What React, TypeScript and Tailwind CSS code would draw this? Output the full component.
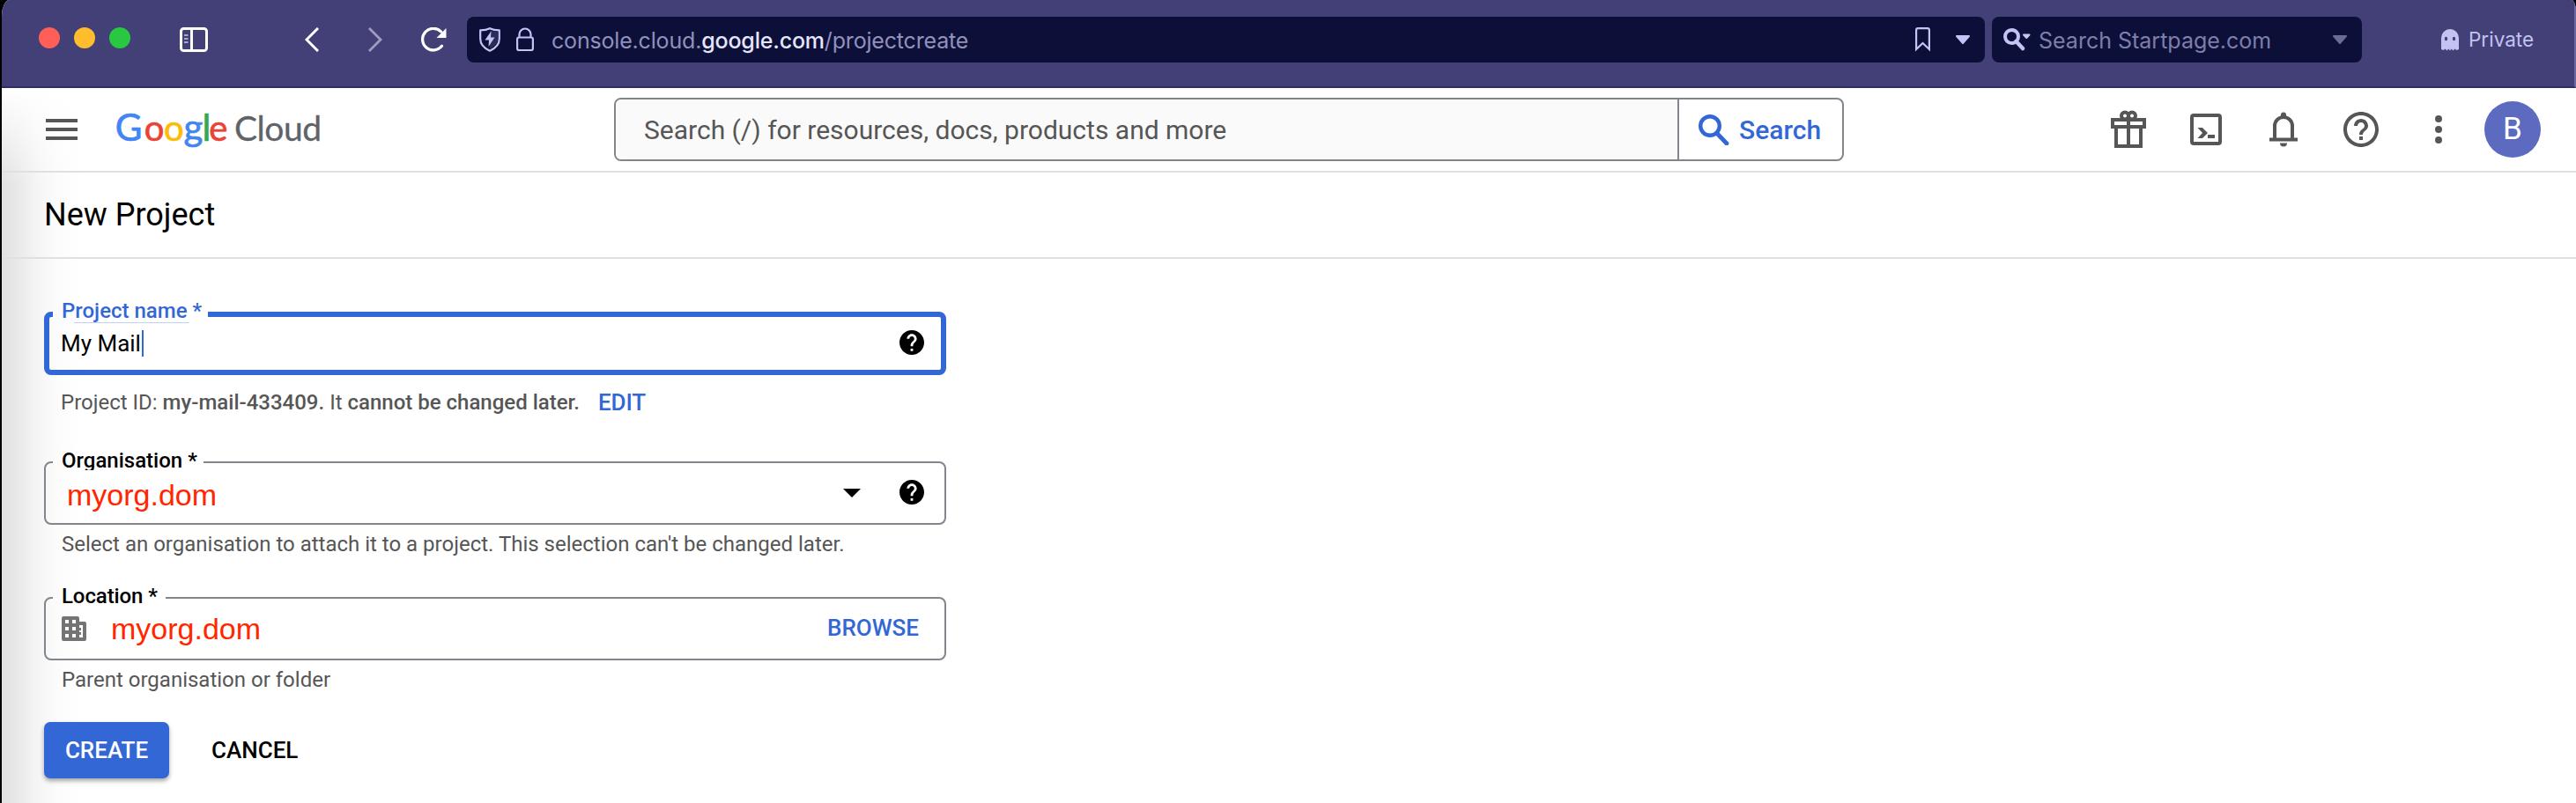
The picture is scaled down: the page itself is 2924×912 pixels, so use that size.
import type { ReactNode } from 'react';

function HelpFilled() {
  return (
    <svg width="28" height="28" viewBox="2 2 20 20" fill="#000">
      <path d="M12 2C6.48 2 2 6.48 2 12s4.48 10 10 10 10-4.48 10-10S17.52 2 12 2zm1 17h-2v-2h2v2zm2.07-7.75l-.9.92C13.45 12.9 13 13.5 13 15h-2v-.5c0-1.1.45-2.1 1.17-2.83l1.24-1.26c.37-.36.59-.86.59-1.41 0-1.1-.9-2-2-2s-2 .9-2 2H8c0-2.21 1.79-4 4-4s4 1.79 4 4c0 .88-.36 1.68-.93 2.25z" />
    </svg>
  );
}

function RoundCaret({ color }: { color: string }) {
  return (
    <svg width="16" height="10" viewBox="0 0 16 10" fill={color} stroke={color} strokeWidth="2" strokeLinejoin="round">
      <path d="M1 1h14L8 9z" />
    </svg>
  );
}

function BrowserBar() {
  return (
    <div className="flex h-[100px] items-start border-b-2 border-[#312d63] border-r-2 border-r-[#6b69a0] bg-[#424076] pl-[42px] pt-[19px] font-['Inter',sans-serif]">
      <div className="mt-3 flex gap-4">
        <span className="size-6 rounded-full bg-[#ff5f57]" />
        <span className="size-6 rounded-full bg-[#febc2e]" />
        <span className="size-6 rounded-full bg-[#28c840]" />
      </div>
      <svg className="ml-[56px] mt-3" width="32" height="28" viewBox="0 0 32 28" fill="none" stroke="#fff" strokeWidth="3">
        <rect x="1.5" y="1.5" width="29" height="25" rx="3" />
        <path d="M13.5 1.5v25" />
        <path d="M5 9h4.500M5 13h4.500M5 17h4.500" stroke="#a9a8c8" strokeWidth="1.800" />
      </svg>
      <svg className="ml-[110px] mt-3" width="16" height="28" viewBox="0 0 16 28" fill="none" stroke="#fff" strokeWidth="3">
        <path d="M15 1L2 14l13 13" />
      </svg>
      <svg className="ml-[56px] mt-3" width="16" height="28" viewBox="0 0 16 28" fill="none" stroke="#9f9dbf" strokeWidth="2.800">
        <path d="M1 1l13 13L1 27" />
      </svg>
      <svg className="ml-[43px] mt-3" width="30" height="28" viewBox="0 0 30 28" fill="none">
        <path d="M23.500 4.800A12.300 12.300 0 1 0 24.500 21.300" stroke="#fff" strokeWidth="3.200" strokeLinecap="round" />
        <path d="M29.500 1v11h-11z" fill="#fff" />
      </svg>

      <div className="ml-[23px] flex h-[52px] w-[1723px] items-center rounded-lg bg-[#0c1038] pl-[14px] pr-[17px]">
        <svg width="24" height="28" viewBox="0 0 24 28">
          <path d="M12 1.200C15 2.700 19 3.300 22.800 3.300V13C22.800 19.500 18 24 12 26.700 6 24 1.200 19.500 1.200 13V3.300C5 3.300 9 2.700 12 1.200z" fill="none" stroke="#c3c4f5" strokeWidth="2.200" strokeLinejoin="round" />
          <path d="M12 3.500C15 4.500 18 5 21 5.200V13C21 18 17 22 12 24.500z" fill="#2b2c58" />
          <path d="M13.500 4.500L6.500 14.500h4.500l-.5 7.500 7-10.500h-4.500z" fill="#c3c4f5" />
        </svg>
        <svg className="ml-[18px]" width="20" height="28" viewBox="0 0 20 28" fill="none" stroke="#c3c4f5" strokeWidth="2.200">
          <rect x="1.100" y="11.500" width="17.800" height="14.500" rx="2" />
          <path d="M3.500 11.500V8a6.500 6.500 0 0 1 13 0v3.500" />
        </svg>
        <span className="ml-[20px] mt-[2px] flex-1 whitespace-nowrap text-[25px] leading-8 tracking-[-0.180px] text-[#9290bd]">
          console.cloud.<span className="font-medium text-[#e6e5fb]">google.com</span>/projectcreate
        </span>
        <svg className="mr-[29px]" width="17" height="28" viewBox="0 0 17 28" fill="none" stroke="#c3c4f5" strokeWidth="2.200">
          <path d="M1.100 25V3a2 2 0 0 1 2-1.900h10.800a2 2 0 0 1 2 1.900V25l-7.400-7z" />
        </svg>
        <RoundCaret color="#c3c4f5" />
      </div>

      <div className="ml-2 flex h-[52px] w-[420px] items-center rounded-lg bg-[#0c1038] pl-[13px] pr-[17px]">
        <svg width="31" height="26" viewBox="0 0 31 26" fill="none">
          <circle cx="9.500" cy="9.500" r="7.500" stroke="#c3c4f5" strokeWidth="4" />
          <path d="M14.500 15l7.500 8" stroke="#c3c4f5" strokeWidth="4.500" strokeLinecap="round" />
          <path d="M23 7.500h6.500L26.300 11z" fill="#c3c4f5" stroke="#c3c4f5" strokeWidth="2" strokeLinejoin="round" />
        </svg>
        <span className="ml-[9px] mt-[2px] flex-1 whitespace-nowrap text-[25px] leading-8 text-[#7f7dab]">Search Startpage.com</span>
        <RoundCaret color="#6b6a99" />
      </div>

      <svg className="ml-[90px] mt-[14px]" width="20" height="25" viewBox="0 0 20 25">
        <path d="M0 10a10 10 0 0 1 20 0v13l-2.500 1-2-1.500-2 2-1.800-2L10 24.500l-1.700-2-1.800 2-2-2-2 1.500L0 23z" fill="#c3c2f3" />
        <ellipse cx="5.500" cy="11" rx="1.700" ry="2.200" fill="#424076" />
        <ellipse cx="14.500" cy="11" rx="1.700" ry="2.200" fill="#424076" />
      </svg>
      <span className="ml-[11px] mt-[14px] text-[22.500px] leading-[24px] text-[#c3c2f3]">Private</span>
    </div>
  );
}

function Logo() {
  return (
    <svg className="ml-9" width="248" height="72" viewBox="124 111 248 72" fontFamily="Lato, sans-serif">
      <g fontSize="42" strokeWidth="0.700">
        <text x="130.800" y="160" fill="#4285f4" stroke="#4285f4">G</text>
        <text x="163.800" y="160" fontSize="40" fill="#ea4335" stroke="#ea4335">o</text>
        <text x="186" y="160" fontSize="40" fill="#fbbc05" stroke="#fbbc05">o</text>
        <text x="208.500" y="160" fill="#4285f4" stroke="#4285f4">g</text>
        <text x="229.500" y="160" fill="#34a853" stroke="#34a853">l</text>
        <text x="237.300" y="160" fontSize="40" fill="#ea4335" stroke="#ea4335">e</text>
      </g>
      <text x="266" y="160" fontSize="39" letterSpacing="-0.450" fill="#5f6368" stroke="#5f6368" strokeWidth="0.300">Cloud</text>
    </svg>
  );
}

function ConsoleHeader() {
  return (
    <header className="flex h-24 items-center border-b-2 border-[#e0e0e0] pl-[50px]">
      <svg width="36" height="24" viewBox="0 0 36 24" fill="#565656">
        <path d="M0 0h36v4H0zM0 10h36v4H0zM0 20h36v4H0z" />
      </svg>
      <Logo />
      <div className="ml-[325px] flex h-[72px] w-[1396px] overflow-hidden rounded-lg border-2 border-[#80868b]">
        <div className="flex w-[1205px] items-center bg-[#fafafa] pl-8 text-[30px] text-[#565656]">
          Search (/) for resources, docs, products and more
        </div>
        <button className="flex flex-1 items-center border-l-2 border-[#80868b] pl-[22px] text-[30px] font-medium text-[#3367d6]">
          <svg width="35" height="35" viewBox="0 0 35 35" fill="none" stroke="#3367d6">
            <circle cx="13" cy="13" r="10.800" strokeWidth="4.400" />
            <path d="M21 21.500L32 33" strokeWidth="4.800" strokeLinecap="round" />
          </svg>
          <span className="ml-[11px]">Search</span>
        </button>
      </div>

      <svg className="ml-[303px]" width="40" height="44" viewBox="0 0 40 44" fill="none" stroke="#565656" strokeWidth="4">
        <path d="M2 11h36v8H2zM6 19v22h28V19M20 11v30" />
        <circle cx="16" cy="6.500" r="4" />
        <circle cx="24" cy="6.500" r="4" />
      </svg>
      <svg className="ml-[50px]" width="36" height="36" viewBox="0 0 36 36">
        <rect x="2" y="2" width="32" height="32" rx="2" fill="none" stroke="#565656" strokeWidth="4" />
        <path d="M8.500 16h5.500l6 6-6 6H8.500l5.500-6zM20 24h8v4h-8z" fill="#565656" />
      </svg>
      <svg className="ml-[54px]" width="32" height="40" viewBox="0 0 32 40">
        <path d="M6 31V16a10 10 0 0 1 20 0v15M0 31.500h32" fill="none" stroke="#565656" strokeWidth="4" />
        <path d="M13 7V3.500a3 3 0 0 1 6 0V7zM12 35.500h8a4 4 0 0 1-8 0z" fill="#565656" />
      </svg>
      <svg className="ml-[52px]" width="40" height="40" viewBox="2 2 20 20" fill="#565656">
        <path d="M11 18h2v-2h-2v2zm1-16C6.480 2 2 6.480 2 12s4.480 10 10 10 10-4.480 10-10S17.520 2 12 2zm0 18c-4.410 0-8-3.590-8-8s3.590-8 8-8 8 3.590 8 8-3.590 8-8 8zm0-14c-2.210 0-4 1.790-4 4h2c0-1.100.9-2 2-2s2 .9 2 2c0 2-3 1.750-3 5h2c0-2.250 3-2.500 3-5 0-2.210-1.790-4-4-4z" />
      </svg>
      <svg className="ml-16" width="8" height="32" viewBox="0 0 8 32" fill="#565656">
        <circle cx="4" cy="4" r="4" />
        <circle cx="4" cy="16" r="4" />
        <circle cx="4" cy="28" r="4" />
      </svg>
      <div className="ml-12 flex size-16 items-center justify-center rounded-full bg-[#5c6bc0] text-[35px] leading-10 text-white">B</div>
    </header>
  );
}

function Field({ label, focused, children }: { label: ReactNode; focused?: boolean; children: ReactNode }) {
  return (
    <fieldset
      className={
        focused
          ? 'h-[72px] w-[1024px] rounded-lg border-[6px] border-[#3367d6] pl-1'
          : 'h-[72px] w-[1024px] rounded-lg border-2 border-[#80868b] pl-2'
      }
    >
      {label}
      {children}
    </fieldset>
  );
}

export default function App() {
  return (
    <div className="h-[912px] w-[2924px] overflow-hidden bg-black pl-[2px] font-['Roboto',sans-serif]">
      <div className="h-full overflow-hidden rounded-tl-[9px_18px] rounded-tr-[5px_14px] bg-white">
        <BrowserBar />
        <div className="h-[812px] bg-[linear-gradient(to_bottom,#ffffff_0px,#ffffff00_110px),linear-gradient(to_right,#e1e1e1_0px,#e9e9e9_18px,#f4f4f4_38px,#fbfbfb_60px,#ffffff_90px)]">
          <ConsoleHeader />
          <div className="flex h-[98px] items-center border-b-2 border-[#e0e0e0] pl-12 text-[36px] text-black">New Project</div>

          <main className="flex flex-col pl-12 pt-[60px]">
            <Field
              focused
              label={
                <legend className="flex h-[6px] w-[176px] items-center pl-[10px]">
                  <span className="relative -top-1 whitespace-nowrap text-[24px] font-medium leading-6 text-[#3367d6]">
                    Project name *
                    <span className="absolute left-[14px] top-[25px] h-px w-[131px] bg-[#c2d1f3]" />
                  </span>
                </legend>
              }
            >
              <div className="flex h-[60px] items-center justify-between pl-[9px] pr-[19px]">
                <span className="flex items-center text-[26px] leading-8 text-black">
                  My Mail
                  <span className="ml-px h-[30px] w-[2px] bg-[#3367d6]" />
                </span>
                <span className="-mt-[2px]">
                  <HelpFilled />
                </span>
              </div>
            </Field>
            <div className="mt-[19px] flex h-6 items-center pl-[19px] text-[24px] leading-6 text-[#565656]">
              <span className="whitespace-pre">
                Project ID: <b className="font-medium">my-mail-433409.</b> It <b className="font-medium">cannot be changed later.</b>
              </span>
              <button className="ml-[21px] text-[26px] font-medium leading-6 tracking-[-0.150px] text-[#3367d6]">EDIT</button>
            </div>

            <div className="h-[55px]" />
            <Field
              label={
                <legend className="flex h-[2px] w-[171px] items-center pl-[10px]">
                  <span className="relative top-[-2px] h-6 whitespace-nowrap text-[24px] font-medium leading-6 text-black [clip-path:inset(-4px_-4px_1px_-4px)]">
                    Organisation *
                  </span>
                </legend>
              }
            >
              <div className="flex h-[68px] items-center pl-4 pr-[23px]">
                <span className="mt-[4px] flex-1 font-['Liberation_Sans',sans-serif] text-[34px] leading-10 text-[#ff2600]">myorg.dom</span>
                <svg width="20" height="10" viewBox="0 0 20 10">
                  <path d="M0 0h20L10 10z" />
                </svg>
                <span className="-mt-[2px] ml-11">
                  <HelpFilled />
                </span>
              </div>
            </Field>
            <div className="mt-[10px] pl-5 text-[24px] leading-6 text-[#565656]">
              Select an organisation to attach it to a project. This selection can't be changed later.
            </div>

            <div className="h-[48px]" />
            <Field
              label={
                <legend className="flex h-[2px] w-[128px] items-center pl-[10px]">
                  <span className="relative top-[-2px] whitespace-nowrap text-[24px] font-medium leading-6 tracking-[-0.100px] text-black [clip-path:inset(-4px_-4px_3px_-4px)]">
                    Location *
                  </span>
                </legend>
              }
            >
              <div className="flex h-[68px] items-center pl-[10px] pr-[29px]">
                <svg width="28" height="28" viewBox="0 0 28 28">
                  <path
                    fillRule="evenodd"
                    fill="#747474"
                    d="M2 0h16a2 2 0 0 1 2 2v4h6a2 2 0 0 1 2 2v18a2 2 0 0 1-2 2H2a2 2 0 0 1-2-2V2a2 2 0 0 1 2-2zM4 4v4h4V4zm8 0v4h4V4zM4 12v4h4v-4zm8 0v4h4v-4zM4 20v4h4v-4zm8 0v4h4v-4zM20 10v3h2v3h-2v2h2v3h-2v3h4V10z"
                  />
                </svg>
                <span className="ml-[28px] flex-1 font-['Liberation_Sans',sans-serif] text-[34px] leading-10 text-[#ff2600]">myorg.dom</span>
                <button className="-mt-[2px] text-[26px] font-medium leading-6 text-[#3367d6]">BROWSE</button>
              </div>
            </Field>
            <div className="mt-[10px] pl-5 text-[24px] leading-6 text-[#565656]">Parent organisation or folder</div>

            <div className="mt-9 flex h-16 items-center">
              <button className="h-16 w-[142px] rounded-[7px] bg-[#3367d6] text-[26px] font-medium text-white shadow-[0_3px_5px_rgba(0,0,0,0.35)]">
                CREATE
              </button>
              <button className="ml-12 text-[26px] font-medium text-black">CANCEL</button>
            </div>
          </main>
        </div>
      </div>
    </div>
  );
}
